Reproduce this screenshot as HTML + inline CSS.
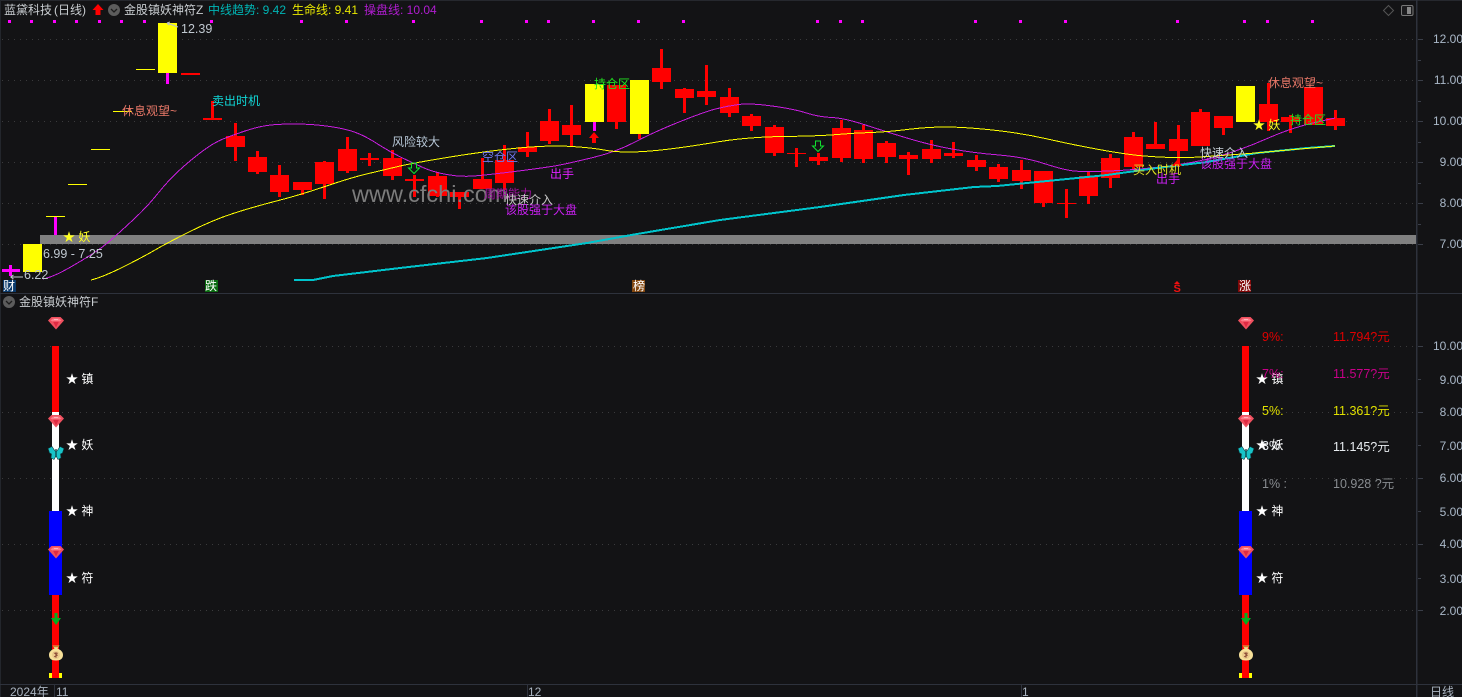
<!DOCTYPE html>
<html><head><meta charset="utf-8"><title>K</title>
<style>
html,body{margin:0;padding:0;background:#131315;width:1462px;height:697px;overflow:hidden}
svg{display:block;position:absolute;left:0;top:0}
text{font-family:"Liberation Sans","Noto Sans CJK SC",sans-serif;font-size:12px;white-space:pre}
</style></head><body>
<svg width="1462" height="697" viewBox="0 0 1462 697" xmlns="http://www.w3.org/2000/svg">
<defs>
<g id="gem"><path d="M-8-2.500L-4.500-6H4.500L8-2.500L0 6.500Z" fill="#f0505f"/><path d="M-5.500-2.500L-3-4.500H3L5.500-2.500L3-1.500L-3-1.500Z" fill="#ff7e8a"/><path d="M-3-1.500L3-1.500L0 4.500Z" fill="#e02a42"/><path d="M-2-3.500H2" stroke="#ffb4bc" stroke-width="1"/></g>
<g id="fly"><path d="M-1-2L-4-6.500L-8-4.500L-6.500 0L-4.500 1L-5 5L-2 6.500L0 3L2 6.500L5 5L4.500 1L6.500 0L8-4.500L4-6.500L1-2Z" fill="#18c4c8" stroke="#0c3438" stroke-width=".6"/><path d="M0-4V4" stroke="#0c3438" stroke-width="1.200"/></g>
<g id="bag"><path d="M-3.500-7.500H3.500L1.500-4.500C5-3 7-1 7 2C7 6 4 7.500 0 7.500C-4 7.500-7 6-7 2C-7-1-5-3-1.500-4.500Z" fill="#f6e098"/><circle cx="0" cy="2" r="4" fill="#ecca8c"/><path d="M-3-6.500H3" stroke="#c8882c" stroke-width="1.500"/><path d="M1.800 0.300H-1.200L1.200 2.200L-1.800 3.800M0 -0.800V4.800" stroke="#8a4a34" stroke-width="1" fill="none"/></g>
<path id="dnarrow" d="M-2.500-5H2.500V0H5.500L0 5.500L-5.500 0H-2.500Z" fill="none" stroke="#10e030" stroke-width="1"/>
</defs>

<rect width="1462" height="697" fill="#131315"/>
<path d="M0 .5H1462" stroke="#26282e" stroke-width="1"/>
<path d="M.5 0V697" stroke="#23262c" stroke-width="1"/>

<!-- grid -->
<g stroke="#3a3a3c" stroke-width="1" stroke-dasharray="1 5">
<path d="M2 39.500H1416M2 80.500H1416M2 121.500H1416M2 162.500H1416M2 203.500H1416M2 244.500H1416"/>
<path d="M2 346.500H1416M2 412.500H1416M2 478.500H1416M2 544.500H1416M2 610.500H1416"/>
</g>

<!-- axis frames -->
<path d="M1416.750 0V697" stroke="#2e323c" stroke-width="1.500"/>
<path d="M0 293.500H1462M0 684.500H1462" stroke="#2e323c" stroke-width="1"/>
<path d="M1418 39.500h5M1418 80.500h5M1418 121.500h5M1418 162.500h5M1418 203.500h5M1418 244.500h5M1418 60.500h3M1418 101.500h3M1418 142.500h3M1418 183.500h3M1418 224.500h3M1418 346.500h5M1418 412.500h5M1418 478.500h5M1418 544.500h5M1418 610.500h5M1418 379.500h3M1418 445.500h3M1418 511.500h3M1418 578.500h3" stroke="#3a3e48" stroke-width="1"/>
<path d="M54.500 685V697M527.500 685V697M1021.500 685V697" stroke="#2e323c" stroke-width="1"/>

<!-- grey band -->
<rect x="40" y="235" width="1376" height="9" fill="#808080"/>

<!-- magenta dots -->
<path fill="#ff00ff" d="M8 20h3v3h-3zM30 20h3v3h-3zM53 20h3v3h-3zM75 20h3v3h-3zM98 20h3v3h-3zM120 20h3v3h-3zM143 20h3v3h-3zM210 20h3v3h-3zM300 20h3v3h-3zM345 20h3v3h-3zM412 20h3v3h-3zM480 20h3v3h-3zM525 20h3v3h-3zM547 20h3v3h-3zM592 20h3v3h-3zM637 20h3v3h-3zM682 20h3v3h-3zM816 20h3v3h-3zM839 20h3v3h-3zM861 20h3v3h-3zM974 20h3v3h-3zM1019 20h3v3h-3zM1064 20h3v3h-3zM1176 20h3v3h-3zM1243 20h3v3h-3zM1266 20h3v3h-3zM1311 20h3v3h-3z"/>

<!-- red candles -->
<path shape-rendering="crispEdges" fill="#ff0000" d="M181 73h19v2h-19zM203 118h19v2h-19zM211 101h3v18h-3z
M226 136h19V147h-19zM234 123h3V161h-3z
M248 157h19V172h-19zM256 151h3V174h-3z
M270 175h19V192h-19zM278 165h3V197h-3z
M293 182h19V190h-19zM301 182h3V195h-3z
M315 162h19V184h-19zM323 161h3V199h-3z
M338 149h19V171h-19zM346 137h3V173h-3z
M360 158h19V160h-19zM368 153h3V166h-3z
M383 158h19V176h-19zM391 150h3V180h-3z
M405 179h19V181h-19zM413 175h3V197h-3z
M428 176h19V196h-19zM436 172h3V197h-3z
M450 192h19V197h-19zM458 192h3V209h-3z
M473 179h19V189h-19zM481 158h3V189h-3z
M495 160h19V183h-19zM503 145h3V190h-3z
M518 147h19V152h-19zM526 132h3V157h-3z
M540 121h19V141h-19zM548 109h3V144h-3z
M562 125h19V135h-19zM570 105h3V147h-3z
M607 85h19V122h-19zM615 85h3V129h-3z
M638 134h3V139h-3z
M652 68h19V82h-19zM660 49h3V89h-3z
M675 89h19V98h-19zM683 88h3V113h-3z
M697 91h19V97h-19zM705 65h3V105h-3z
M720 97h19V113h-19zM728 88h3V117h-3z
M742 116h19V126h-19zM750 114h3V131h-3z
M765 127h19V153h-19zM773 125h3V156h-3z
M787 153h19V154h-19zM795 148h3V167h-3z
M809 157h19V161h-19zM817 153h3V165h-3z
M832 128h19V158h-19zM840 120h3V162h-3z
M854 130h19V159h-19zM862 125h3V163h-3z
M877 143h19V157h-19zM885 141h3V163h-3z
M899 155h19V159h-19zM907 152h3V175h-3z
M922 149h19V159h-19zM930 140h3V163h-3z
M944 153h19V156h-19zM952 142h3V158h-3z
M967 160h19V167h-19zM975 155h3V171h-3z
M989 167h19V179h-19zM997 164h3V182h-3z
M1012 170h19V181h-19zM1020 160h3V189h-3z
M1034 171h19V203h-19zM1042 171h3V207h-3z
M1057 203h19V204h-19zM1065 189h3V218h-3z
M1079 176h19V196h-19zM1087 172h3V204h-3z
M1101 158h19V178h-19zM1109 154h3V188h-3z
M1124 137h19V167h-19zM1132 132h3V170h-3z
M1146 144h19V149h-19zM1154 122h3V149h-3z
M1169 139h19V151h-19zM1177 125h3V167h-3z
M1191 112h19V146h-19zM1199 109h3V146h-3z
M1214 116h19V128h-19zM1222 116h3V135h-3z
M1259 104h19V122h-19zM1267 83h3V131h-3z
M1281 117h19V122h-19zM1289 115h3V133h-3z
M1304 87h19V125h-19z
M1326 118h19V126h-19zM1334 110h3V130h-3z"/>

<!-- yellow candles -->
<path shape-rendering="crispEdges" fill="#ffff00" d="M23 244h19V272h-19zM46 216h19v1h-19zM68 184h19v1h-19zM91 149h19v1h-19zM113 111h19v1h-19zM136 69h19v1h-19zM158 23h19V73h-19zM585 84h19V122h-19zM630 80h19V134h-19zM1236 86h19V122h-19z"/>

<!-- magenta candles -->
<path shape-rendering="crispEdges" fill="#ff00ff" d="M2 269h18v3h-18zM9 265h3V276h-3zM54 217h3V235h-3zM166 73h3V84h-3zM593 122h3V131h-3z"/>

<!-- lines -->
<g fill="none" stroke-width="1" shape-rendering="crispEdges">
<path stroke="#c81ee0" d="M43 279 Q53 277 68 268.5 Q83 260 93 253.5 Q103 247 111.5 239.5 Q120 232 133.5 219.5 Q147 207 157 194.5 Q167 182 177 172.5 Q187 163 200 153 Q213 143 223 139 Q233 135 245 131 Q257 127 267 125.5 Q277 124 295 124 Q313 124 330 126.5 Q347 129 357 133 Q367 137 378.5 144.5 Q390 152 401.5 157.5 Q413 163 423 167.5 Q433 172 446.5 174.5 Q460 177 473.5 176 Q487 175 518.5 171 Q550 167 560 165 Q570 163 593 157.5 Q616 152 635 142 Q654 132 679 122 Q704 112 715.5 109 Q727 106 738.5 104.5 Q750 103 772 106 Q794 109 806.5 113 Q819 117 831.5 117.5 Q844 118 865.5 125 Q887 132 908.5 138.5 Q930 145 952 149 Q974 153 999 155 Q1024 157 1044 163.5 Q1064 170 1074 171 Q1084 172 1109 171 Q1134 170 1164 166.5 Q1194 163 1217.5 156.5 Q1241 150 1266 139 Q1291 128 1313 123 L1335 118"/>
<polyline stroke="#00c4cc" stroke-width="2" points="294,280 313,280 333,276 400,268 487,258 587,243 637,234 720,220 820,207 904,195 974,187 997,186 1057,180 1107,175 1157,168 1207,162 1257,153 1307,148 1335,146"/>
<path stroke="#ffff00" d="M91 280 Q103 277 123 267 Q143 257 155 250 Q167 243 190 231.5 Q213 220 233 213.5 Q253 207 276.5 201 Q300 195 325 186.5 Q350 178 366.5 174 Q383 170 398 166.5 Q413 163 450 157 Q487 151 518.5 148 Q550 145 572 146.5 Q594 148 604 150 Q614 152 629 152 Q644 152 665.5 149.5 Q687 147 717 142 Q747 137 783.5 136.5 Q820 136 837 134.5 Q854 133 870.5 132.5 Q887 132 907 129.5 Q927 127 945.5 127 Q964 127 992.5 130 Q1021 133 1047.5 139 Q1074 145 1099 149.5 Q1124 154 1139 155.5 Q1154 157 1170.5 157.5 Q1187 158 1207 156.5 Q1227 155 1242 154 Q1257 153 1282 150.5 L1335 146"/>
</g>

<!-- arrows -->
<use href="#dnarrow" x="414" y="168"/>
<use href="#dnarrow" x="818" y="146"/>
<path fill="#ff0000" d="M594 132L599 138H596V143H592V138H589Z"/>
<path fill="#ff0000" d="M1177 160L1182 166H1172Z"/>
<path fill="#ff0000" d="M98 4L103.500 10H100.500V15H95.500V10H92.500Z"/>
<path d="M167 23L178 27M167 23l3 -1M167 23l2 2" stroke="#b8c0c8" stroke-width="1" fill="none"/>
<path d="M10.500 277H23M10.500 277l3-2M10.500 277l3 2" stroke="#c0c8d0" stroke-width="1" fill="none"/>

<!-- header -->
<text x="4" y="14" fill="#c8ccd0">蓝黛科技</text><text x="54" y="14" fill="#c8ccd0">(日线)</text>
<circle cx="114" cy="10" r="6" fill="#5c5c5c"/><path d="M111 9l3 3 3-3" fill="none" stroke="#1c1c1c" stroke-width="1.300"/>
<text x="124" y="14" fill="#c8ccd0">金股镇妖神符Z</text>
<text x="208" y="14" fill="#00b4b4">中线趋势: 9.42</text>
<text x="292" y="14" fill="#e8e800">生命线: 9.41</text>
<text x="364" y="14" fill="#b01cd0">操盘线: 10.04</text>
<path d="M1388.500 5.500L1393.500 10.500L1388.500 15.500L1383.500 10.500Z" fill="none" stroke="#555" stroke-width="1"/>
<rect x="1401.500" y="5.500" width="11.500" height="10" rx="1.500" fill="#1c1c1e" stroke="#777" stroke-width="1"/><rect x="1407" y="7" width="4" height="7" fill="#888"/>

<!-- right axis -->
<g fill="#aab8c8" text-anchor="end" style="font-size:13px">
<text x="1463" y="43">12.00</text><text x="1463" y="84">11.00</text><text x="1463" y="125">10.00</text><text x="1463" y="166">9.00</text><text x="1463" y="207">8.00</text><text x="1463" y="248">7.00</text>
<text x="1463" y="350">10.00</text><text x="1463" y="384">9.00</text><text x="1463" y="416">8.00</text><text x="1463" y="450">7.00</text><text x="1463" y="482">6.00</text><text x="1463" y="516">5.00</text><text x="1463" y="548">4.00</text><text x="1463" y="583">3.00</text><text x="1463" y="615">2.00</text>
</g>

<!-- watermark -->
<text x="352" y="202" fill="#7c7c7c" style="font-size:23.500px">www.cfchi.com</text>

<!-- chart annotations -->
<g>
<text x="181" y="33" fill="#c0c8d0" style="font-size:12.500px">12.39</text>
<text x="43" y="258" fill="#c0c8d0" style="font-size:12.500px">6.99 - 7.25</text>
<text x="24" y="279" fill="#c0c8d0" style="font-size:12.500px">6.22</text>
<text x="122" y="115" fill="#e87868">休息观望~</text>
<text x="212" y="105" fill="#10d8d8">卖出时机</text>
<text x="392" y="146" fill="#b8c8d8">风险较大</text>
<text x="482" y="161" fill="#7078f0">空仓区</text>
<text x="594" y="88" fill="#20e020">持仓区</text>
<text x="550" y="178" fill="#e020ff">出手</text>
<text x="484" y="198" fill="#a010a0">周期能力</text>
<text x="505" y="204" fill="#c8c8c8">快速介入</text>
<text x="505" y="214" fill="#c820f0">该股强于大盘</text>
<text x="1133" y="174" fill="#e0e020">买入时机</text>
<text x="1156" y="183" fill="#d020f8">出手</text>
<text x="1200" y="157" fill="#c8d0d8">快速介入</text>
<text x="1200" y="168" fill="#c820f0">该股强于大盘</text>
<text x="1268" y="87" fill="#e87868">休息观望~</text>
<text x="1290" y="124" fill="#20e020">持仓区</text>
<text x="63" y="241" fill="#ffff20">★ 妖</text>
<text x="1253" y="129" fill="#ffff20">★ 妖</text>
</g>

<!-- badges -->
<rect x="3" y="280" width="13" height="12" fill="#0a3a6c"/><text x="3" y="290" fill="#fff">财</text>
<rect x="205" y="280" width="13" height="12" fill="#0a6c10"/><text x="205" y="290" fill="#fff">跌</text>
<rect x="632" y="280" width="13" height="12" fill="#844810"/><text x="633" y="290" fill="#fff">榜</text>
<rect x="1238" y="280" width="13" height="12" fill="#800808"/><text x="1239" y="290" fill="#fff">涨</text>
<path d="M1177 281l3 3h-6z" fill="#f01010"/><text x="1173.500" y="292" fill="#f01010" style="font-size:11px;font-weight:bold">S</text>

<!-- lower panel -->
<circle cx="9" cy="302" r="6" fill="#5c5c5c"/><path d="M6 301l3 3 3-3" fill="none" stroke="#1c1c1c" stroke-width="1.300"/>
<text x="19" y="306" fill="#c8ccd0">金股镇妖神符F</text>

<g id="col">
<path shape-rendering="crispEdges" fill="#ff0000" d="M52 346h7V412h-7zM52 595h7V678h-7z"/>
<path shape-rendering="crispEdges" fill="#ffffff" d="M52 412h7V511h-7z"/>
<path shape-rendering="crispEdges" fill="#0000ff" d="M49 511h13V595h-13z"/>
<path shape-rendering="crispEdges" fill="#ffff00" d="M49 673h3v5h-3zM59 673h3v5h-3z"/>
<use href="#gem" x="56" y="323"/><use href="#gem" x="56" y="421"/><use href="#gem" x="56" y="552"/>
<use href="#fly" x="56" y="453"/>
<path fill="#00b020" d="M54.500 613h3v5h3.500l-5 7-5-7h3.500z"/>
<use href="#bag" x="56" y="653"/>
<text x="66" y="383" fill="#fff">★ 镇</text>
<text x="66" y="449" fill="#fff">★ 妖</text>
<text x="66" y="515" fill="#fff">★ 神</text>
<text x="66" y="582" fill="#fff">★ 符</text>
</g>
<g transform="translate(1190 0)">
<path shape-rendering="crispEdges" fill="#ff0000" d="M52 346h7V412h-7zM52 595h7V678h-7z"/>
<path shape-rendering="crispEdges" fill="#ffffff" d="M52 412h7V511h-7z"/>
<path shape-rendering="crispEdges" fill="#0000ff" d="M49 511h13V595h-13z"/>
<path shape-rendering="crispEdges" fill="#ffff00" d="M49 673h3v5h-3zM59 673h3v5h-3z"/>
<use href="#gem" x="56" y="323"/><use href="#gem" x="56" y="421"/><use href="#gem" x="56" y="552"/>
<use href="#fly" x="56" y="453"/>
<path fill="#00b020" d="M54.500 613h3v5h3.500l-5 7-5-7h3.500z"/>
<use href="#bag" x="56" y="653"/>
<text x="66" y="383" fill="#fff">★ 镇</text>
<text x="66" y="449" fill="#fff">★ 妖</text>
<text x="66" y="515" fill="#fff">★ 神</text>
<text x="66" y="582" fill="#fff">★ 符</text>
</g>

<!-- percent table -->
<g style="font-size:12.500px">
<text x="1262" y="341" fill="#e00000" style="font-size:12.500px">9%:</text><text x="1333" y="341" fill="#e00000" style="font-size:12.500px">11.794?元</text>
<text x="1262" y="378" fill="#c80088" style="font-size:12.500px">7%:</text><text x="1333" y="378" fill="#c80088" style="font-size:12.500px">11.577?元</text>
<text x="1262" y="415" fill="#e0e000" style="font-size:12.500px">5%:</text><text x="1333" y="415" fill="#e0e000" style="font-size:12.500px">11.361?元</text>
<text x="1262" y="450" fill="#e8ecf0" style="font-size:12.500px">3%:</text><text x="1333" y="451" fill="#e8ecf0" style="font-size:12.500px">11.145?元</text>
<text x="1262" y="488" fill="#888c90" style="font-size:12.500px">1% :</text><text x="1333" y="488" fill="#888c90" style="font-size:12.500px">10.928 ?元</text>
</g>

<!-- time axis -->
<g fill="#aab4c0">
<text x="10" y="696">2024年</text><text x="56" y="696">11</text>
<text x="528" y="696">12</text><text x="1022" y="696">1</text>
<text x="1430" y="696">日线</text>
</g>
</svg>
</body></html>
